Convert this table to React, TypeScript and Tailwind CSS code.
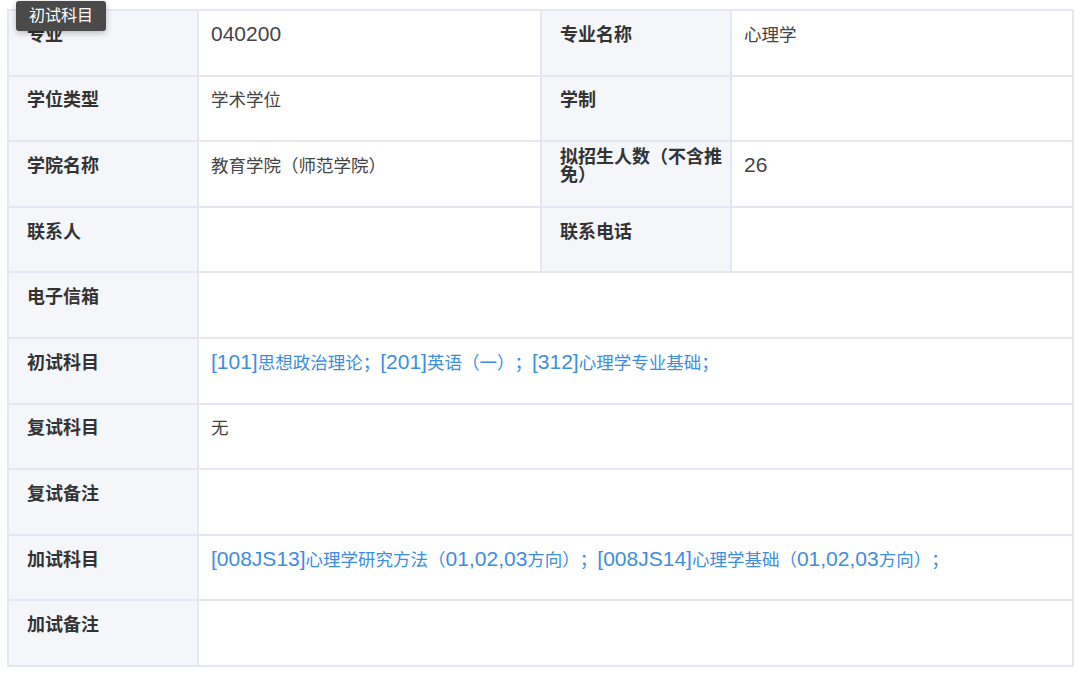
import React from "react";

const font = { fontFamily: '"Liberation Sans", "Noto Sans CJK SC", sans-serif' };

function Mixed({ s }: { s: string }) {
  const parts = s.split(/([\x00-\x7F]+)/).filter((p) => p.length > 0);
  return (
    <>
      {parts.map((p, i) =>
        /^[\x00-\x7F]+$/.test(p) ? (
          <span key={i} className="text-[21px] leading-[18px]">
            {p}
          </span>
        ) : (
          <span key={i}>{p}</span>
        )
      )}
    </>
  );
}

function Label({ children }: { children: React.ReactNode }) {
  return (
    <div className="flex items-center bg-[#f5f6fa] border-r-2 border-b-2 border-[#e6e6f2] pl-[18px] pr-[4px] pb-[16px] text-[18px] leading-[18px] font-bold text-[#333]">
      <div>{children}</div>
    </div>
  );
}

function Value({ text, span, link }: { text?: string; span?: boolean; link?: boolean }) {
  return (
    <div
      className={
        "flex items-center bg-white border-r-2 border-b-2 border-[#e6e6f2] pl-[12px] pr-[8px] pb-[16px] text-[17.5px] leading-[18px] " +
        (span ? "col-span-3 " : "") +
        (link ? "text-[#3d8de0]" : "text-[#444]")
      }
    >
      <div>{text ? <Mixed s={text} /> : null}</div>
    </div>
  );
}

export default function App() {
  return (
    <div className="relative w-[1080px] h-[678px] bg-white [text-spacing-trim:space-all]" style={font}>
      <div className="pt-[9px] pl-[7px]">
        <div className="grid w-[1067px] grid-cols-[190px_343px_190px_342px] auto-rows-[65.6px] border-l-2 border-t-2 border-[#e6e6f2]">
          <Label>专业</Label>
          <Value text="040200" />
          <Label>专业名称</Label>
          <Value text="心理学" />

          <Label>学位类型</Label>
          <Value text="学术学位" />
          <Label>学制</Label>
          <Value />

          <Label>学院名称</Label>
          <Value text="教育学院（师范学院）" />
          <Label>拟招生人数（不含推免）</Label>
          <Value text="26" />

          <Label>联系人</Label>
          <Value />
          <Label>联系电话</Label>
          <Value />

          <Label>电子信箱</Label>
          <Value span />

          <Label>初试科目</Label>
          <Value span link text="[101]思想政治理论；[201]英语（一）；[312]心理学专业基础；" />

          <Label>复试科目</Label>
          <Value span text="无" />

          <Label>复试备注</Label>
          <Value span />

          <Label>加试科目</Label>
          <Value span link text="[008JS13]心理学研究方法（01,02,03方向）；[008JS14]心理学基础（01,02,03方向）；" />

          <Label>加试备注</Label>
          <Value span />
        </div>
      </div>
      <div className="absolute left-[16px] top-[1px] w-[90px] h-[30px] rounded-[3px] bg-[#4a4a4a] text-white text-[16px] leading-[30px] text-center shadow-[0_2px_6px_rgba(0,0,0,0.25)]">
        初试科目
      </div>
    </div>
  );
}
